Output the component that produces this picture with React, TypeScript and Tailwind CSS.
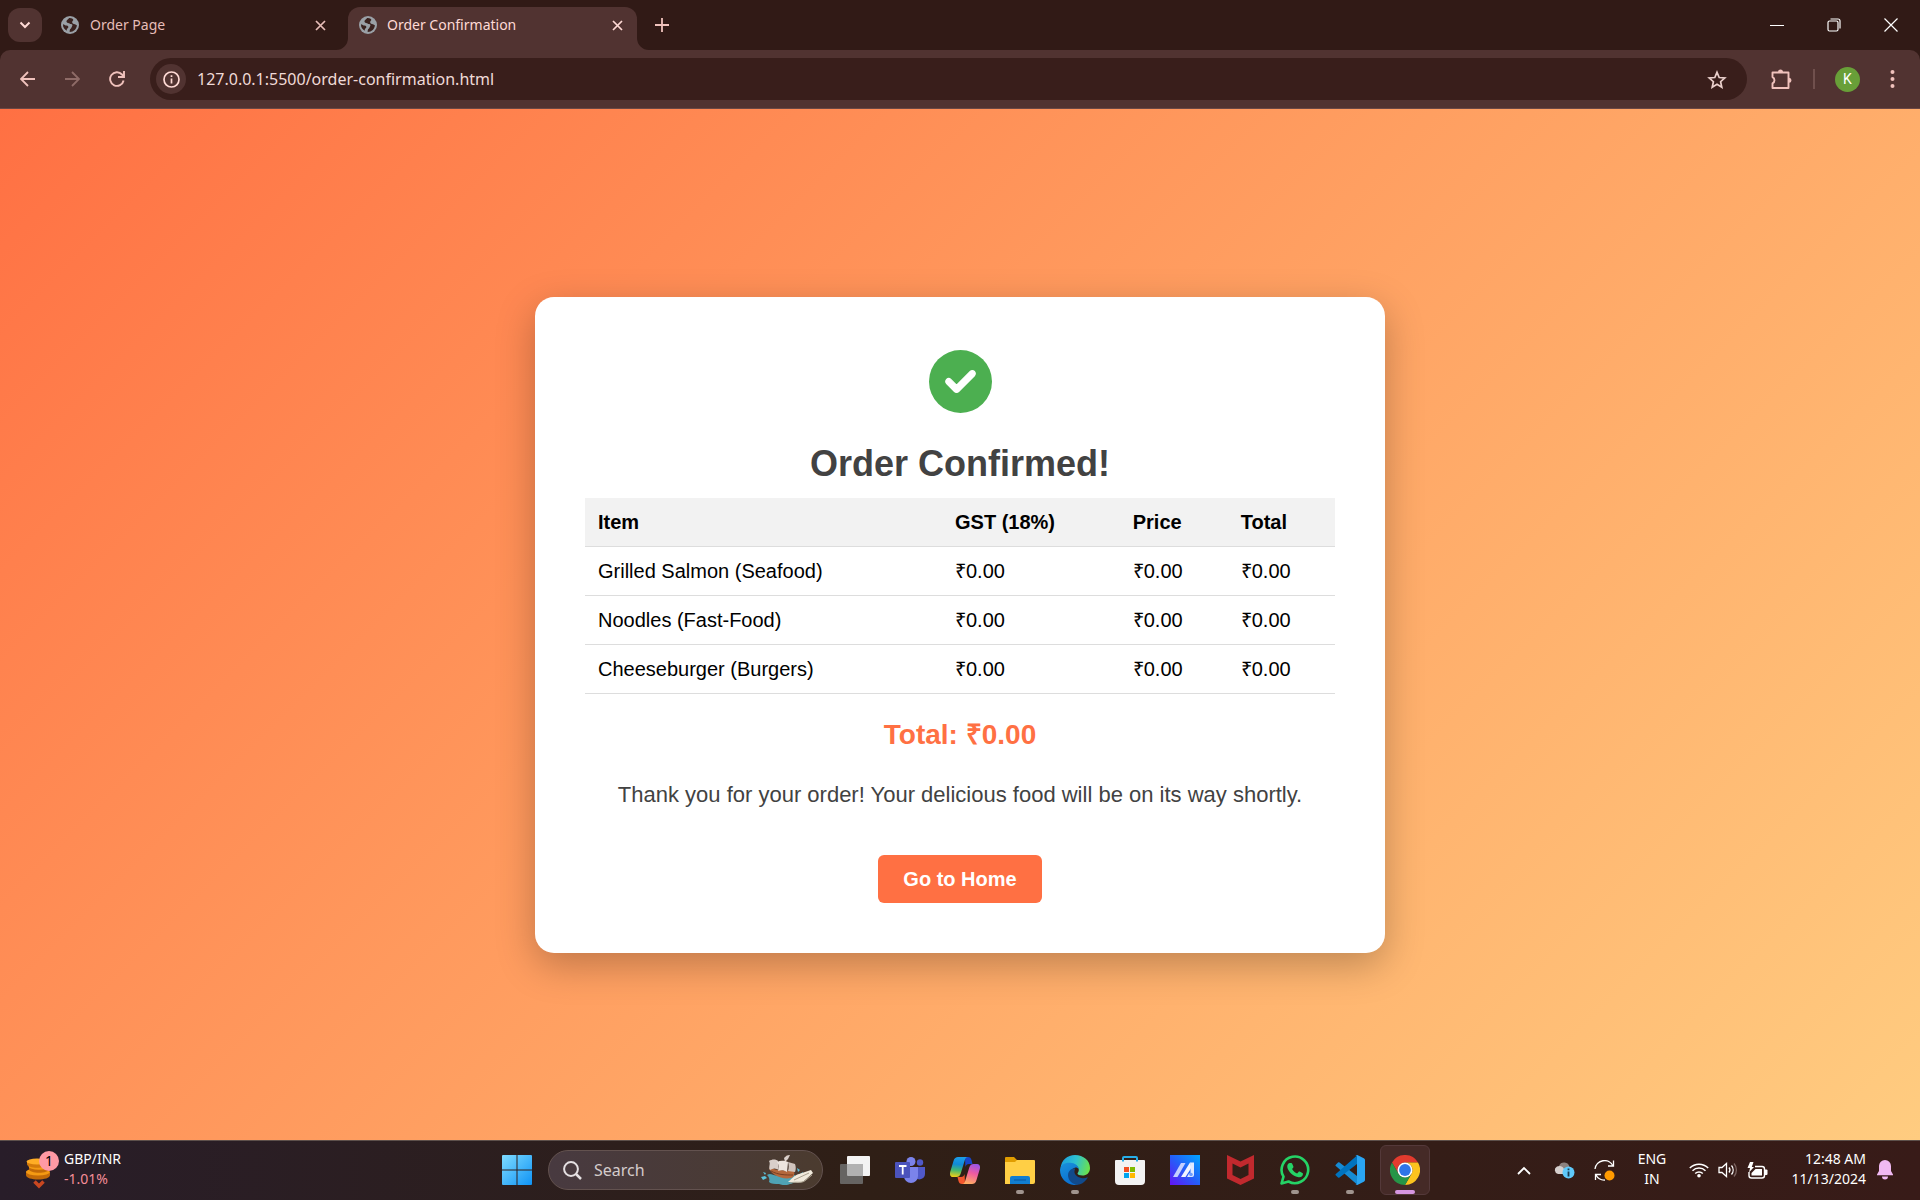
import React, { type ReactNode } from "react";

function GlobeIcon() {
  return (
    <svg width="18" height="18" viewBox="0 0 18 18" aria-hidden="true">
      <circle cx="9" cy="9" r="9" fill="#9aa0a6" />
      <path d="M8.200 2C7.500 3.300 5.800 3.700 5.500 5c-.2 1.100.5 1.800 1.600 1.900 1.400.1 1.700 1.100 2.900 1.100 1.500 0 1.700 1.100 1.100 2.200-.6 1-.5 1.700-1.500 2.600-.8.700-1 1.700-.9 3.100 4-.1 7-3 7.200-6.700-1-.1-1.700-1.300-2.900-1.300-1.300 0-1.900-.8-1.800-1.800.1-1.100 1.100-1.300 1.100-2.300 0-1-2.300-2.100-4.100-1.800Z" fill="#3a221f" />
      <path d="M2 8.200c1.300.3 2.200 1.200 3.600 1.400 1.500.2 1.900 1 1.700 1.900-.2.900-1.500.9-1.500 2 0 .6.100.9.300 1.300C3.600 13.800 1.700 11.300 2 8.200Z" fill="#3a221f" />
    </svg>
  );
}

function Cross({ color }: { color: string }) {
  return (
    <svg width="11" height="11" viewBox="0 0 11 11" stroke={color} strokeWidth="1.7" aria-hidden="true">
      <path d="M1 1l9 9M10 1l-9 9" />
    </svg>
  );
}

function TabStrip() {
  return (
    <div className="flex h-[50px] items-end bg-[#311a16] pl-2 text-[#f0cdc8]">
      <button aria-label="Search tabs" className="mb-2 flex h-[34px] w-[34px] items-center justify-center rounded-xl bg-[#513331]">
        <svg width="12" height="8" viewBox="0 0 12 8" fill="none" stroke="#ffdad5" strokeWidth="2" aria-hidden="true">
          <path d="M1.500 1.500L6 6l4.500-4.500" />
        </svg>
      </button>
      <div className="flex h-[43px] w-[306px] items-center pr-[22px] pb-[7px] pl-[19px]">
        <GlobeIcon />
        <span className="ml-[11px] flex-1 text-sm text-[#e6bdb8]">Order Page</span>
        <button aria-label="Close Order Page"><Cross color="#e6bdb8" /></button>
      </div>
      <div className="relative flex h-[43px] w-[289px] items-center rounded-t-xl bg-[#513331] pr-[14px] pb-[7px] pl-[11px]">
        <svg className="absolute bottom-0 -left-3" width="12" height="12" viewBox="0 0 12 12" fill="#513331" aria-hidden="true">
          <path d="M12 0v12H0A12 12 0 0 0 12 0Z" />
        </svg>
        <svg className="absolute -right-3 bottom-0" width="12" height="12" viewBox="0 0 12 12" fill="#513331" aria-hidden="true">
          <path d="M0 0v12h12A12 12 0 0 1 0 0Z" />
        </svg>
        <GlobeIcon />
        <span className="ml-[10px] flex-1 text-sm text-[#ffdad5]">Order Confirmation</span>
        <button aria-label="Close Order Confirmation"><Cross color="#ffdad5" /></button>
      </div>
      <button aria-label="New tab" className="mb-[18px] ml-[18px]">
        <svg width="14" height="14" viewBox="0 0 14 14" stroke="#f0c2bc" strokeWidth="1.8" aria-hidden="true">
          <path d="M7 0v14M0 7h14" />
        </svg>
      </button>
      <div className="mb-[18px] ml-auto flex items-center gap-[43px] pr-[22px]">
        <button aria-label="Minimize" className="flex h-[14px] w-[14px] items-center"><span className="h-px w-full bg-white" /></button>
        <button aria-label="Restore">
          <svg width="14" height="14" viewBox="0 0 14 14" fill="none" stroke="#fff" strokeWidth="1.2" aria-hidden="true">
            <rect x="1" y="3" width="10" height="10" rx="1.5" />
            <path d="M3.500 1H11a2 2 0 0 1 2 2v7.500" />
          </svg>
        </button>
        <button aria-label="Close window">
          <svg width="14" height="14" viewBox="0 0 14 14" stroke="#fff" strokeWidth="1.2" aria-hidden="true"><path d="M.5.5l13 13M13.500.5l-13 13" /></svg>
        </button>
      </div>
    </div>
  );
}

function Toolbar() {
  return (
    <div className="bg-[#311a16]">
      <div className="flex h-[59px] items-center rounded-t-[10px] border-b border-[#6a4744] bg-[#513331] pr-[25px] pl-5">
        <button aria-label="Back">
          <svg width="16" height="16" viewBox="0 0 16 16" fill="none" stroke="#f0c2bc" strokeWidth="1.8" aria-hidden="true"><path d="M15 8H1.500M8 1L1 8l7 7" /></svg>
        </button>
        <button aria-label="Forward" className="ml-7">
          <svg width="16" height="16" viewBox="0 0 16 16" fill="none" stroke="#8e6b67" strokeWidth="1.8" aria-hidden="true"><path d="M1 8h13.500M8 1l7 7-7 7" /></svg>
        </button>
        <button aria-label="Reload" className="ml-[29px]">
          <svg width="16" height="16" viewBox="0 0 16 16" fill="none" stroke="#f0c2bc" strokeWidth="1.9" aria-hidden="true">
            <path d="M14.600 9.500A6.800 6.800 0 1 1 13 3.500l1.500 1.700" /><path d="M15 0v6H9" />
          </svg>
        </button>
        <div className="ml-[25px] flex h-[42px] flex-1 items-center rounded-full bg-[#391e1b] pr-5 pl-[6px]">
          <button aria-label="View site information" className="flex h-[30px] w-[30px] items-center justify-center rounded-full bg-[#513331]">
            <svg width="17" height="17" viewBox="0 0 17 17" fill="none" stroke="#ffdad5" strokeWidth="1.7" aria-hidden="true">
              <circle cx="8.500" cy="8.500" r="7.500" /><path d="M8.500 7.500v5M8.500 4.200v1.800" />
            </svg>
          </button>
          <input aria-label="Address" defaultValue="127.0.0.1:5500/order-confirmation.html" className="ml-[11px] min-w-0 flex-1 bg-transparent text-base text-[#f0dad7] outline-none" />
          <button aria-label="Bookmark this tab">
            <svg width="20" height="19" viewBox="0 0 20 19" fill="none" stroke="#ead0cc" strokeWidth="1.7" aria-hidden="true">
              <path d="M10 2.300l2.200 5.200 5.600.5-4.200 3.700 1.200 5.500L10 14.300l-4.800 2.900 1.200-5.500L2.200 8l5.600-.5Z" />
            </svg>
          </button>
        </div>
        <button aria-label="Extensions" className="ml-6">
          <svg width="21" height="21" viewBox="0 0 21 21" aria-hidden="true">
            <path d="M1.500 3.500H17.500v15.500H1.500v-4.600a3.500 3.500 0 0 0 0-6.300Z" fill="none" stroke="#f0c2bc" strokeWidth="1.9" strokeLinejoin="round" />
            <path d="M7 3a2.500 2.500 0 0 1 5 0ZM18 8.800a2.500 2.500 0 0 1 0 5Z" fill="#f0c2bc" />
          </svg>
        </button>
        <span className="ml-[21px] h-5 w-[2px] bg-[#70504d]" />
        <button aria-label="Profile K" className="ml-5 flex h-[25px] w-[25px] items-center justify-center rounded-full bg-[#689f38] font-[Roboto,sans-serif] text-sm text-white">K</button>
        <button aria-label="Chrome menu" className="ml-[30px]">
          <svg width="5" height="18" viewBox="0 0 5 18" fill="#f0c2bc" aria-hidden="true"><circle cx="2.500" cy="2" r="2" /><circle cx="2.500" cy="9" r="2" /><circle cx="2.500" cy="16" r="2" /></svg>
        </button>
      </div>
    </div>
  );
}

const items = ["Grilled Salmon (Seafood)", "Noodles (Fast-Food)", "Cheeseburger (Burgers)"];

function OrderPage() {
  return (
    <main className='flex flex-1 items-center justify-center bg-linear-135 from-[#ff7043] to-[#ffcc80] font-["Liberation_Sans",Arial,sans-serif]'>
      <section className="flex w-[850px] max-w-full flex-col items-center rounded-[19px] bg-white p-[50px] shadow-[0_12px_38px_rgba(0,0,0,0.25)]">
        <svg className="mt-[3px]" width="63" height="63" viewBox="0 0 512 512" aria-hidden="true">
          <circle cx="256" cy="256" r="256" fill="#4caf50" />
          <path d="M369 175c9.400 9.400 9.400 24.600 0 33.900L241 337c-9.400 9.400-24.600 9.400-33.900 0l-64-64c-9.400-9.400-9.400-24.600 0-33.900s24.600-9.400 33.900 0l47 47L335 175c9.400-9.400 24.600-9.400 33.900 0Z" fill="#fff" stroke="#fff" strokeWidth="10" strokeLinejoin="round" />
        </svg>
        <h1 className="mt-[29px] text-4xl leading-[44px] font-bold text-[#424242]">Order Confirmed!</h1>
        <table className="mt-3 w-full table-fixed border-collapse text-left text-xl leading-6 text-black">
          <colgroup>
            <col className="w-[47.6%]" />
            <col className="w-[23.7%]" />
            <col className="w-[14.4%]" />
            <col />
          </colgroup>
          <thead>
            <tr className="border-b border-[#ddd] bg-[#f2f2f2]">
              {["Item", "GST (18%)", "Price", "Total"].map((h) => (
                <th key={h} scope="col" className="px-[13px] py-3 font-bold">{h}</th>
              ))}
            </tr>
          </thead>
          <tbody>
            {items.map((name) => (
              <tr key={name} className="border-b border-[#ddd]">
                <td className="px-[13px] py-3">{name}</td>
                <td className="px-[13px] py-3">₹0.00</td>
                <td className="px-[13px] py-3">₹0.00</td>
                <td className="px-[13px] py-3">₹0.00</td>
              </tr>
            ))}
          </tbody>
        </table>
        <p className="mt-[25px] text-[28px] leading-8 font-bold text-[#ff7043]">Total: ₹0.00</p>
        <p className="mt-7 text-[22px] leading-8 text-[#424242]">Thank you for your order! Your delicious food will be on its way shortly.</p>
        <a href="#home" className="mt-11 rounded-md bg-[#ff7043] px-[25px] py-3 text-xl leading-6 font-bold text-white">Go to Home</a>
      </section>
    </main>
  );
}

function TaskbarButton({ label, children, running = false, active = false }: { label: string; children: ReactNode; running?: boolean; active?: boolean }) {
  return (
    <button
      aria-label={label}
      className={
        active
          ? "relative flex h-[50px] w-[50px] items-center justify-center rounded-md border border-[#54393a] bg-[#452a27]"
          : "relative flex h-[50px] w-[50px] items-center justify-center"
      }
    >
      {children}
      {running && <span className="absolute bottom-px h-1 w-2 rounded-full bg-[#a0948e]" />}
      {active && <span className="absolute bottom-0 h-1 w-5 rounded-full bg-[#d696e0]" />}
    </button>
  );
}

function ShipArt() {
  return (
    <svg width="52" height="32" viewBox="0 0 52 32" aria-hidden="true">
      <path d="M6 21c4-3 7 2 12 0s11 1 16 0l2 6c-4 3-8 3-10 4-3 0-6 0-8-1-4 0-8 0-10-2 1-3 0-5-2-7Z" fill="#4fa3b5" />
      <path d="M0 23l4-1 2 2-4 2ZM2 18l3 1-1 2ZM36 14l3 2-2 2ZM39 20l3-2-1 4Z" fill="#5cc3dc" />
      <path d="M8 14l9 2 16 1c1 3 0 6-3 7-5 1-11 0-16-3-3-2-5-4-6-7Z" fill="#b4683c" />
      <path d="M10 17c7 4 15 4 22 4" stroke="#7a3f23" fill="none" />
      <path d="M26 1l-3 16M14 7l1 9M32 9v8" stroke="#714c39" />
      <path d="M23 4c2-2 3-3 6-3l-2 4-3 3Z" fill="#d9cfca" />
      <path d="M8 7c3-2 7-2 9 0l1 9c-3-2-6-2-9 0-2-3 1-6-1-9Z" fill="#d9cfca" />
      <path d="M16 8c4-2 8-1 11 0l-1 10c-3-2-6-2-9-1 2-3 1-6-1-9Z" fill="#ece4de" />
      <path d="M27 8l7 2c1 3 1 5 0 8l-7-1c1-3 1-6 0-9Z" fill="#cfc3bd" />
      <path d="M27 28c3-2 6-7 11-8l12-4 2 3-9 8c-4 3-10 1-16 1Z" fill="#f1eadc" />
      <path d="M29 29c7-2 12 1 16-3l6-5M33 26l15-7" stroke="#aaa18f" fill="none" />
    </svg>
  );
}

function Taskbar() {
  return (
    <footer className="grid h-[60px] grid-cols-[1fr_auto_1fr] items-center border-t border-[#5d504b] bg-linear-to-r from-[#281d29] via-[#2f1f16] via-45% to-[#381b18] pb-px text-white">
      <button className="flex items-center pl-[25px] text-left">
        <span className="relative block h-[38px] w-[34px]">
          <svg className="mt-1" width="26" height="34" viewBox="0 0 26 34" aria-hidden="true">
            <path d="M1 17h24v3c0 6-24 6-24 0Z" fill="#c36a08" />
            <ellipse cx="13" cy="17" rx="12" ry="3.500" fill="#f49a13" />
            <path d="M4 11h20v3c0 5-20 5-20 0Z" fill="#c36a08" />
            <ellipse cx="14" cy="11.500" rx="10.500" ry="3.300" fill="#f49a13" />
            <path d="M2 6h20v3c0 5-20 5-20 0Z" fill="#d47a0a" />
            <ellipse cx="12" cy="6.500" rx="10.500" ry="3" fill="#ffad25" />
            <path d="M9.500 26.500l4.500 4.500 4.500-4.500" fill="none" stroke="#c94720" strokeWidth="3.5" />
          </svg>
          <span className="absolute top-0 left-[14px] flex h-5 w-5 items-center justify-center rounded-full bg-[#ff99a4] text-sm text-black">1</span>
        </span>
        <span className="ml-[5px] pb-[2px] text-sm leading-5"><span className="block">GBP/INR</span><span className="block text-[#f58d98]">-1.01%</span></span>
      </button>

      <div className="flex items-center pl-3">
        <button aria-label="Start" className="mr-4">
          <svg width="30" height="30" viewBox="0 0 30 30" aria-hidden="true">
            <defs><linearGradient id="win" x1="0" y1="0" x2="1" y2="1"><stop stopColor="#7fdcff" /><stop offset="1" stopColor="#0f93f5" /></linearGradient></defs>
            <path d="M1 0h13.500v14.500H0V1a1 1 0 0 1 1-1ZM15.500 0H29a1 1 0 0 1 1 1v13.500H15.500ZM0 15.500h14.500V30H1a1 1 0 0 1-1-1ZM15.500 15.500H30V29a1 1 0 0 1-1 1H15.500Z" fill="url(#win)" />
          </svg>
        </button>
        <label className="mr-[7px] flex h-10 w-[275px] items-center rounded-full border border-[#63524f] bg-linear-to-r from-[#483a40] to-[#4b3b2f] pr-[9px] pl-[14px]">
          <svg width="19" height="19" viewBox="0 0 19 19" fill="none" stroke="#e5e0e2" strokeWidth="2" aria-hidden="true"><circle cx="8" cy="8" r="6.900" /><path d="M13 13l5 5" strokeWidth="2.5" /></svg>
          <input aria-label="Search" placeholder="Search" className="ml-3 min-w-0 flex-1 bg-transparent text-base placeholder:text-[#d4cccb] outline-none" />
          <ShipArt />
        </label>
        <div className="flex items-center gap-[5px]">
          <TaskbarButton label="Task view">
            <svg width="30" height="28" viewBox="0 0 30 28" aria-hidden="true">
              <rect x="7" width="23" height="20" rx="1" fill="#f3f3f3" /><rect y="8" width="23" height="20" rx="1" fill="#666462" /><path d="M7 8h16v12H8a1 1 0 0 1-1-1Z" fill="#b1b1b1" />
            </svg>
          </TaskbarButton>
          <TaskbarButton label="Teams">
            <svg width="30" height="27" viewBox="0 0 30 27" aria-hidden="true">
              <circle cx="25" cy="5.500" r="3.200" fill="#5059c9" /><path d="M20 10h10v7a5.500 5.500 0 0 1-10 3Z" fill="#5059c9" />
              <circle cx="16" cy="4.500" r="4.500" fill="#7b83eb" /><path d="M9 10h14v9a7 7 0 0 1-14 0Z" fill="#7b83eb" />
              <rect y="5" width="15" height="16" rx="1" fill="#4b53bc" /><path d="M4 9h7.500M7.700 9v8.500" stroke="#fff" strokeWidth="1.8" />
            </svg>
          </TaskbarButton>
          <TaskbarButton label="Copilot">
            <svg width="30" height="27" viewBox="0 0 30 27" aria-hidden="true">
              <defs>
                <linearGradient id="cp1" x1=".3" y1="0" x2=".2" y2="1"><stop stopColor="#1b9de8" /><stop offset=".35" stopColor="#1089d8" /><stop offset=".65" stopColor="#44b86f" /><stop offset="1" stopColor="#f5cf13" /></linearGradient>
                <linearGradient id="cp2" x1=".7" y1="0" x2=".4" y2="1"><stop stopColor="#9a55e8" /><stop offset=".45" stopColor="#ee5aa0" /><stop offset="1" stopColor="#ffae62" /></linearGradient>
              </defs>
              <path d="M15 0h3c2 0 3 1 3.500 3l1 4H19c-2 0-3 1-3.600 3Z" fill="#1745c8" />
              <path d="M15 27h-3c-2 0-3-1-3.500-3l-1-4H11c2 0 3-1 3.600-3Z" fill="#f4572e" />
              <path d="M8 0h10c-2 0-2.700 1.500-3.300 3.500l-4 13C10 19 8.500 20 6.500 20H3c-2.500 0-3.500-2-2.800-5L3.500 4C4.300 1 6 0 8 0Z" fill="url(#cp1)" />
              <path d="M22 27H12c2 0 2.700-1.500 3.300-3.500l4-13C20 8 21.500 7 23.500 7H27c2.500 0 3.500 2 2.800 5l-3.300 11c-.8 3-2.500 4-4.500 4Z" fill="url(#cp2)" />
            </svg>
          </TaskbarButton>
          <TaskbarButton label="File Explorer" running>
            <svg width="30" height="27" viewBox="0 0 30 27" aria-hidden="true">
              <path d="M0 1a1 1 0 0 1 1-1h8l3 3h10v6H0Z" fill="#e09d00" /><path d="M0 5h10l2-2h17a1 1 0 0 1 1 1v21a2 2 0 0 1-2 2H0Z" fill="#ffcf45" />
              <path d="M5 27v-6a2 2 0 0 1 2-2h16a2 2 0 0 1 2 2v6Z" fill="#117ed1" /><path d="M9 23h12" stroke="#0a549d" />
            </svg>
          </TaskbarButton>
          <TaskbarButton label="Edge" running>
            <svg width="30" height="30" viewBox="0 0 30 30" aria-hidden="true">
              <defs>
                <linearGradient id="e1" x1="0" y1=".3" x2="1" y2=".5"><stop stopColor="#1a9fe0" /><stop offset=".5" stopColor="#2fc1cf" /><stop offset="1" stopColor="#6be14c" /></linearGradient>
                <linearGradient id="e2" x1="0" y1="0" x2=".5" y2="1"><stop stopColor="#1a92dc" /><stop offset="1" stopColor="#0a6fd0" /></linearGradient>
              </defs>
              <path d="M.5 13C1.500 5 7.500 0 15 0c8.500 0 15 5.500 15 13 0 5-3.500 7.500-7.500 7.500-3 0-5-1-5-2 0-.8 1.300-1.400 1.300-3.500 0-3.300-3.300-6-7.500-6C6 9 2 10.500.5 13Z" fill="url(#e1)" />
              <path d="M0 15C.5 10 4.500 7.500 10 7.800c5 .2 8.500 3 8.800 6.500-1-1.500-2.500-2-4-1.500C11 14 9.500 19 12 23c2 3.500 5 5 8 5-2 1.300-4 2-6 1.900C6 29.500 0 23 0 15Z" fill="url(#e2)" />
              <path d="M13 13.500c-6 2-6.500 9-2 13.500 4 3.500 9 3.500 13 0 1.800-1.500 3.500-3.500 3.800-4.800-4 1.500-8 1.300-11-1.200-2.500-2-3-4.500-1.500-7.500Z" fill="#114a8b" />
            </svg>
          </TaskbarButton>
          <TaskbarButton label="Microsoft Store">
            <svg width="30" height="30" viewBox="0 0 30 30" aria-hidden="true">
              <path d="M0 6a1 1 0 0 1 1-1h28a1 1 0 0 1 1 1v20a4 4 0 0 1-4 4H4a4 4 0 0 1-4-4Z" fill="#f3f3f3" />
              <path d="M8 6.500V3a1 1 0 0 1 1-1h12a1 1 0 0 1 1 1v3.500" fill="none" stroke="#27aee8" strokeWidth="2" />
              <path d="M9 12h5v5H9Z" fill="#f25022" /><path d="M15 12h5v5h-5Z" fill="#7fba00" /><path d="M9 18h5v5H9Z" fill="#00a4ef" /><path d="M15 18h5v5h-5Z" fill="#ffb900" />
            </svg>
          </TaskbarButton>
          <TaskbarButton label="MyASUS">
            <svg width="30" height="30" viewBox="0 0 30 30" aria-hidden="true">
              <defs><linearGradient id="asus" x1="0" y1="1" x2="1" y2="0"><stop stopColor="#6412f5" /><stop offset=".5" stopColor="#245ff8" /><stop offset="1" stopColor="#00a5ff" /></linearGradient></defs>
              <path d="M0 0h30v30H0Z" fill="url(#asus)" />
              <path d="M3 22L11 8h4.500L7.500 22Z" fill="#c3cfff" />
              <path d="M11 22L20 7.500l1.500 5L15.500 22Z" fill="#f2f4ff" />
              <path d="M20 7.500h4V20a2 2 0 0 1-2 2h-5l2-3.500h1.500V12Z" fill="#dfe8ff" />
              <circle cx="21" cy="19.500" r="1.800" fill="#6c9cff" />
            </svg>
          </TaskbarButton>
          <TaskbarButton label="McAfee">
            <svg width="27" height="30" viewBox="0 0 27 30" aria-hidden="true">
              <path d="M0 0l13.500 6.500L27 0v23.500L13.500 30 0 23.500ZM5.500 8.500V20l8 4 8-4V8.500l-8 4Z" fill="#c1292e" fillRule="evenodd" />
            </svg>
          </TaskbarButton>
          <TaskbarButton label="WhatsApp" running>
            <svg width="30" height="30" viewBox="0 0 30 30" aria-hidden="true">
              <path d="M1.500 28.500l2-6.800A13.300 13.300 0 1 1 8.500 26.500Z" fill="none" stroke="#25d366" strokeWidth="2.6" strokeLinejoin="round" />
              <path d="M9.500 8h1.700c.5 0 .8.300 1 .8l1.200 2.700c.2.500 0 .9-.3 1.300l-1 1.200c1.200 2.200 2.900 3.700 5 4.500l1.400-1.600c.4-.4.7-.5 1.200-.3l2.700 1.300c.5.300.7.600.6 1.200-.3 2.300-2.200 3.500-4.300 3.200-5.400-.7-10.500-5.500-11.400-10C7 10.200 8 8.500 9.500 8Z" fill="#25d366" />
            </svg>
          </TaskbarButton>
          <TaskbarButton label="Visual Studio Code" running>
            <svg width="30" height="30" viewBox="0 0 30 30" aria-hidden="true">
              <path d="M1 9.500l2-2c.5-.4 1-.4 1.500 0L22 21v8.500L.8 11c-.6-.5-.4-1 .2-1.500Z" fill="#168bd4" />
              <path d="M1 20.500l2 2c.5.400 1 .4 1.500 0L22 9V.5L.8 19c-.6.500-.4 1 .2 1.500Z" fill="#0073bf" />
              <path d="M20.500 29.500c.8.600 1.500.6 2.300.3l6-3c.8-.4 1.200-1 1.200-1.800V5c0-.8-.4-1.400-1.200-1.800l-6-3c-.8-.3-1.500-.3-2.300.3.800-.3 1.500 0 1.500 1v27c0 1-.7 1.300-1.500 1Z" fill="#2aa5f2" />
            </svg>
          </TaskbarButton>
          <TaskbarButton label="Google Chrome" active>
            <svg width="30" height="30" viewBox="0 0 30 30" aria-hidden="true">
              <path d="M2 7.500A15 15 0 0 1 28 7.500H15A7.500 7.500 0 0 0 8.500 18.700Z" fill="#e33b2e" />
              <path d="M28 7.500A15 15 0 0 1 15 30l6.500-11.300A7.500 7.500 0 0 0 15 7.500Z" fill="#fcc31e" />
              <path d="M15 30A15 15 0 0 1 2 7.500l6.500 11.200A7.500 7.500 0 0 0 21.500 18.700Z" fill="#269547" />
              <circle cx="15" cy="15" r="7.500" fill="#fff" /><circle cx="15" cy="15" r="5.900" fill="#2f74e8" />
            </svg>
          </TaskbarButton>
        </div>
      </div>

      <div className="flex items-center justify-end pr-[27px]">
        <button aria-label="Show hidden icons">
          <svg width="14" height="9" viewBox="0 0 14 9" fill="none" stroke="#fff" strokeWidth="1.8" aria-hidden="true"><path d="M1 8l6-6 6 6" /></svg>
        </button>
        <button aria-label="OneDrive" className="ml-[23px]">
          <svg width="21" height="18" viewBox="0 0 21 18" aria-hidden="true">
            <path d="M5 5a5.500 5.500 0 0 1 10.500 1L17 9l-8 4Z" fill="#8c817e" /><path d="M4 13a4 4 0 0 1-1-7.500A5 5 0 0 1 10 8l3 5Z" fill="#d5cfcd" />
            <circle cx="14.500" cy="11.500" r="6" fill="#5fc9fa" /><path d="M14.500 10.500v5M14.500 7.500v1.800" stroke="#173b50" strokeWidth="1.8" />
          </svg>
        </button>
        <button aria-label="Windows Update" className="ml-[19px]">
          <svg width="21" height="21" viewBox="0 0 21 21" fill="none" stroke="#fff" strokeWidth="1.3" aria-hidden="true">
            <path d="M1 9A9.500 9.500 0 0 1 19 6M19.500.5V6H14M1.500 20v-5.500H7M2 15a9.500 9.500 0 0 0 9 5" /><circle cx="15.500" cy="15.500" r="5" fill="#ff9a00" stroke="none" />
          </svg>
        </button>
        <button className="ml-[21px] w-8 pb-[2px] text-center text-sm leading-5">ENG<br />IN</button>
        <button aria-label="Network, volume and battery" className="ml-[21px] flex items-center gap-[9px]">
          <svg width="20" height="16" viewBox="0 0 20 16" fill="none" stroke="#fff" strokeWidth="1.5" aria-hidden="true">
            <path d="M.8 6a13 13 0 0 1 18.400 0M3.500 8.800a9.200 9.200 0 0 1 13 0M6.200 11.500a5.400 5.400 0 0 1 7.600 0" /><circle cx="10" cy="13.800" r="1.800" fill="#fff" stroke="none" />
          </svg>
          <svg width="20" height="16" viewBox="0 0 20 16" fill="none" stroke="#fff" strokeWidth="1.3" aria-hidden="true">
            <path d="M1 5.500h3L8.500 1.500v13L4 10.500H1Z" /><path d="M11 5.500a4 4 0 0 1 0 5M13.500 3.500a7 7 0 0 1 0 9" /><path d="M16 1.500a10 10 0 0 1 0 13" stroke="#7c6561" />
          </svg>
          <svg width="21" height="17" viewBox="0 0 21 17" aria-hidden="true">
            <path d="M8 4.500h7a2.500 2.500 0 0 1 2.500 2.500v6.500A2.500 2.500 0 0 1 15 16H4.500A2.500 2.500 0 0 1 2 13.500V10" fill="none" stroke="#fff" strokeWidth="1.4" />
            <path d="M8.500 7H15v6.500H4.500V11Z" fill="#fff" />
            <path d="M18 7.500h1.500a1 1 0 0 1 1 1V12a1 1 0 0 1-1 1H18Z" fill="#fff" />
            <path d="M3 0L.5 6H3L2 10.500 7 5H4.800L6.500 0Z" fill="#fff" />
          </svg>
        </button>
        <button className="ml-[14px] w-[84px] pb-[2px] text-right text-sm leading-5 whitespace-nowrap">12:48 AM<br />11/13/2024</button>
        <button aria-label="Notifications" className="ml-[11px]">
          <svg width="16" height="20" viewBox="0 0 16 20" fill="#f0b9f2" aria-hidden="true">
            <path d="M8 0a6 6 0 0 1 6 6v5l2 3.500v.7H0v-.7L2 11V6a6 6 0 0 1 6-6ZM5 16.500h6a3 3 0 0 1-6 0Z" />
          </svg>
        </button>
      </div>
    </footer>
  );
}

export default function App() {
  return (
    <div className='flex min-h-screen flex-col font-["Noto_Sans",sans-serif]'>
      <header>
        <TabStrip />
        <Toolbar />
      </header>
      <OrderPage />
      <Taskbar />
    </div>
  );
}
